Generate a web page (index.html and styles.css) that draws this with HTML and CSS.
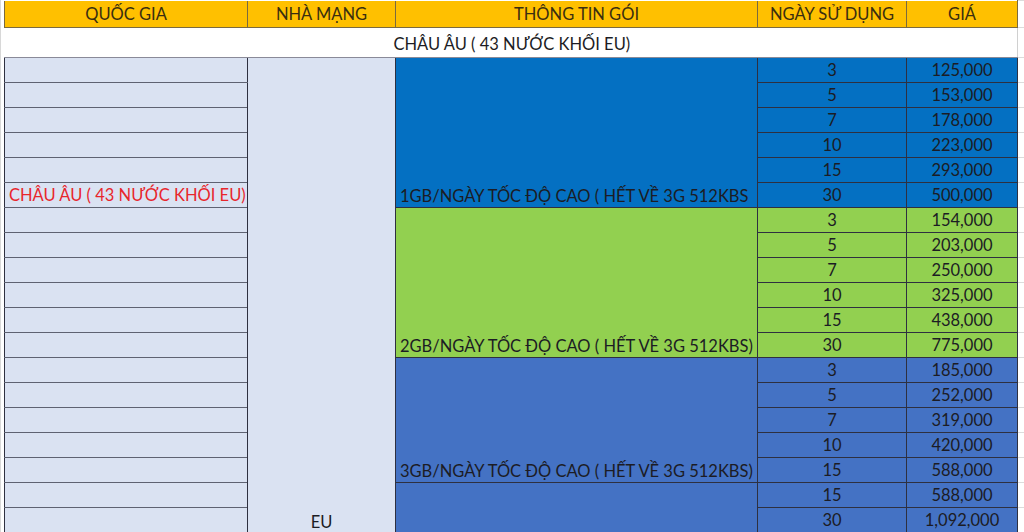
FILE: index.html
```html
<!DOCTYPE html>
<html lang="vi">
<head>
<meta charset="utf-8">
<link rel="stylesheet" href="styles.css">
</head>
<body>
<div class="sheet">
<table class="grid">
<colgroup>
<col class="c1"><col class="c2"><col class="c3"><col class="c4"><col class="c5"><col class="c6">
</colgroup>
<tr class="hdr">
<th>QUỐC GIA</th><th>NHÀ MẠNG</th><th>THÔNG TIN GÓI</th><th>NGÀY SỬ DỤNG</th><th>GIÁ</th><td class="blank"></td>
</tr>
<tr class="sub">
<td colspan="5" class="sub-r">CHÂU ÂU ( 43 NƯỚC KHỐI EU)</td><td class="blank"></td>
</tr>
<tr><td class="cty"></td><td rowspan="19" class="net">EU</td><td rowspan="6" class="pkg g1">1GB/NGÀY TỐC ĐỘ CAO ( HẾT VỀ 3G 512KBS</td><td class="d g1">3</td><td class="p g1">125,000</td><td class="blank"></td></tr>
<tr><td class="cty"></td><td class="d g1">5</td><td class="p g1">153,000</td><td class="blank"></td></tr>
<tr><td class="cty"></td><td class="d g1">7</td><td class="p g1">178,000</td><td class="blank"></td></tr>
<tr><td class="cty"></td><td class="d g1">10</td><td class="p g1">223,000</td><td class="blank"></td></tr>
<tr><td class="cty"></td><td class="d g1">15</td><td class="p g1">293,000</td><td class="blank"></td></tr>
<tr><td class="cty red">CHÂU ÂU ( 43 NƯỚC KHỐI EU)</td><td class="d g1">30</td><td class="p g1">500,000</td><td class="blank"></td></tr>
<tr><td class="cty"></td><td rowspan="6" class="pkg g2">2GB/NGÀY TỐC ĐỘ CAO ( HẾT VỀ 3G 512KBS)</td><td class="d g2">3</td><td class="p g2">154,000</td><td class="blank"></td></tr>
<tr><td class="cty"></td><td class="d g2">5</td><td class="p g2">203,000</td><td class="blank"></td></tr>
<tr><td class="cty"></td><td class="d g2">7</td><td class="p g2">250,000</td><td class="blank"></td></tr>
<tr><td class="cty"></td><td class="d g2">10</td><td class="p g2">325,000</td><td class="blank"></td></tr>
<tr><td class="cty"></td><td class="d g2">15</td><td class="p g2">438,000</td><td class="blank"></td></tr>
<tr><td class="cty"></td><td class="d g2">30</td><td class="p g2">775,000</td><td class="blank"></td></tr>
<tr><td class="cty"></td><td rowspan="5" class="pkg g3">3GB/NGÀY TỐC ĐỘ CAO ( HẾT VỀ 3G 512KBS)</td><td class="d g3">3</td><td class="p g3">185,000</td><td class="blank"></td></tr>
<tr><td class="cty"></td><td class="d g3">5</td><td class="p g3">252,000</td><td class="blank"></td></tr>
<tr><td class="cty"></td><td class="d g3">7</td><td class="p g3">319,000</td><td class="blank"></td></tr>
<tr><td class="cty"></td><td class="d g3">10</td><td class="p g3">420,000</td><td class="blank"></td></tr>
<tr><td class="cty"></td><td class="d g3">15</td><td class="p g3">588,000</td><td class="blank"></td></tr>
<tr><td class="cty"></td><td rowspan="2" class="pkg g3"></td><td class="d g3">15</td><td class="p g3">588,000</td><td class="blank"></td></tr>
<tr><td class="cty"></td><td class="d g3">30</td><td class="p g3">1,092,000</td><td class="blank"></td></tr>
</table>
</div>
</body>
</html>
```
FILE: styles.css
```css
html, body {
  margin: 0;
  padding: 0;
  background: #ffffff;
}
.sheet {
  width: 1024px;
  height: 532px;
  overflow: hidden;
  padding-left: 3px;
  box-sizing: border-box;
  border-left: 1px solid #d8d8d8;
}
.grid {
  border-collapse: collapse;
  table-layout: fixed;
  width: 1021px;
  font-family: "Lato", "Open Sans", sans-serif;
  font-size: 16.5px;
  color: #1c1c24;
}
.c1 { width: 243px; }
.c2 { width: 148px; }
.c3 { width: 362px; }
.c4 { width: 149px; }
.c5 { width: 111px; }
.c6 { width: 8px; }
.grid td, .grid th {
  padding: 0;
  height: 24px;
  line-height: 20px;
  border: 1px solid #2e3040;
  white-space: nowrap;
  overflow: hidden;
}
.hdr th {
  height: 26px;
  background: #ffc000;
  font-weight: normal;
  color: #3a2e10;
  text-align: center;
  border-color: #7a6a40;
  border-top: none;
}
.sub td {
  height: 29px;
  background: #ffffff;
  border-left: none;
  border-right: none;
  border-bottom: 1px solid #8a8a98;
}
.grid td.sub-r {
  height: 26px;
  text-align: left;
  padding-left: 389px;
  color: #1c1c24;
  vertical-align: bottom;
  padding-bottom: 3px;
  border-right: 1px solid #d0d0d0;
}
.grid td.blank {
  background: #ffffff;
  border: none;
  border-top: 1px solid #dcdcdc;
  border-left: 1px solid #dcdcdc;
}
.grid td.cty {
  background: #dae2f2;
  border-top-color: #5e6272;
  border-bottom-color: #5e6272;
  text-align: left;
  padding-left: 4px;
}
.red {
  color: #e8262c;
}
.net {
  background: #dae2f2;
  vertical-align: bottom;
  text-align: center;
  padding-bottom: 2px;
}
.grid td.pkg {
  vertical-align: bottom;
  text-align: left;
  padding-left: 4px;
  padding-bottom: 1px;
}
.d, .p {
  text-align: center;
}
.g1 { background: #0470c2; }
.g2 { background: #92d050; }
.g3 { background: #4472c4; }
```
